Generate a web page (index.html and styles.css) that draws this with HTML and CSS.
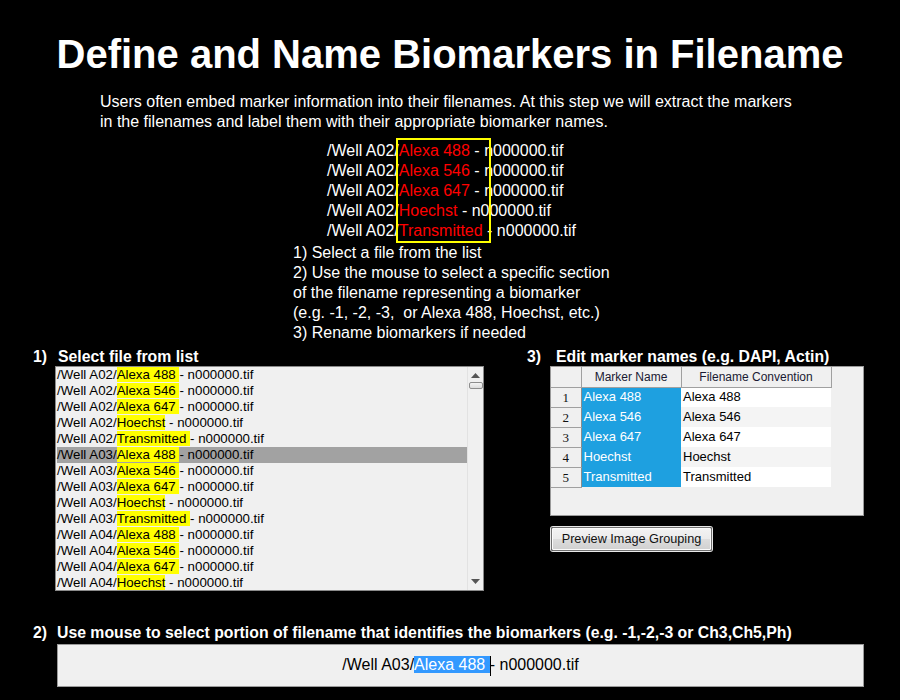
FILE: index.html
```html
<!DOCTYPE html>
<html>
<head>
<meta charset="utf-8">
<link rel="stylesheet" href="styles.css">
</head>
<body>
<div class="page">
  <h1 class="title">Define and Name Biomarkers in Filename</h1>
  <p class="intro">Users often embed marker information into their filenames. At this step we will extract the markers<br>in the filenames and label them with their appropriate biomarker names.</p>
  <div class="examples">
    <div class="ex-box"></div>
    <div>/Well A02/<span class="red">Alexa 488</span> - n000000.tif</div>
    <div>/Well A02/<span class="red">Alexa 546</span> - n000000.tif</div>
    <div>/Well A02/<span class="red">Alexa 647</span> - n000000.tif</div>
    <div>/Well A02/<span class="red">Hoechst</span> - n000000.tif</div>
    <div>/Well A02/<span class="red">Transmitted</span> - n000000.tif</div>
  </div>
  <div class="steps">
    <div>1) Select a file from the list</div>
    <div>2) Use the mouse to select a specific section</div>
    <div>of the filename representing a biomarker</div>
    <div>(e.g. -1, -2, -3, &nbsp;or Alexa 488, Hoechst, etc.)</div>
    <div>3) Rename biomarkers if needed</div>
  </div>

  <div class="panels">
    <div class="panel-left">
      <div class="sec-head"><span class="num n1">1)</span><span>Select file from list</span></div>
      <div class="listbox">
        <div class="items">
          <div class="item">/Well A02/<span class="hl">Alexa 488 </span>- n000000.tif</div>
          <div class="item">/Well A02/<span class="hl">Alexa 546 </span>- n000000.tif</div>
          <div class="item">/Well A02/<span class="hl">Alexa 647 </span>- n000000.tif</div>
          <div class="item">/Well A02/<span class="hl">Hoechst</span> - n000000.tif</div>
          <div class="item">/Well A02/<span class="hl">Transmitted </span>- n000000.tif</div>
          <div class="item sel">/Well A03/<span class="hl">Alexa 488 </span>- n000000.tif</div>
          <div class="item">/Well A03/<span class="hl">Alexa 546 </span>- n000000.tif</div>
          <div class="item">/Well A03/<span class="hl">Alexa 647 </span>- n000000.tif</div>
          <div class="item">/Well A03/<span class="hl">Hoechst</span> - n000000.tif</div>
          <div class="item">/Well A03/<span class="hl">Transmitted </span>- n000000.tif</div>
          <div class="item">/Well A04/<span class="hl">Alexa 488 </span>- n000000.tif</div>
          <div class="item">/Well A04/<span class="hl">Alexa 546 </span>- n000000.tif</div>
          <div class="item">/Well A04/<span class="hl">Alexa 647 </span>- n000000.tif</div>
          <div class="item">/Well A04/<span class="hl">Hoechst</span> - n000000.tif</div>
        </div>
        <div class="scrollbar">
          <svg class="arrow" width="9" height="5" viewBox="0 0 9 5"><polygon points="0,5 9,5 4.5,0" fill="#555"/></svg>
          <div class="thumb"></div>
          <div class="track"></div>
          <svg class="arrow" width="9" height="5" viewBox="0 0 9 5"><polygon points="0,0 9,0 4.5,5" fill="#555"/></svg>
        </div>
      </div>
    </div>

    <div class="panel-right">
      <div class="sec-head"><span class="num n3">3)</span><span>Edit marker names (e.g. DAPI, Actin)</span></div>
      <div class="grid">
        <table class="tbl">
          <tr class="hdr"><th class="rh"></th><th class="c1">Marker Name</th><th class="c2">Filename Convention</th></tr>
          <tr><td class="rh">1</td><td class="blue">Alexa 488</td><td class="w">Alexa 488</td></tr>
          <tr><td class="rh">2</td><td class="blue">Alexa 546</td><td class="g">Alexa 546</td></tr>
          <tr><td class="rh">3</td><td class="blue">Alexa 647</td><td class="w">Alexa 647</td></tr>
          <tr><td class="rh">4</td><td class="blue">Hoechst</td><td class="g">Hoechst</td></tr>
          <tr><td class="rh">5</td><td class="blue">Transmitted</td><td class="w">Transmitted</td></tr>
        </table>
      </div>
      <button class="btn">Preview Image Grouping</button>
    </div>
  </div>

  <div class="section2">
    <div class="sec-head"><span class="num n2">2)</span><span>Use mouse to select portion of filename that identifies the biomarkers (e.g. -1,-2,-3 or Ch3,Ch5,Ph)</span></div>
    <div class="namebox"><span>/Well A03/<span class="selection">Alexa 488 </span><span class="caret"></span>- n000000.tif</span></div>
  </div>
</div>
</body>
</html>
```

FILE: styles.css
```css
* { box-sizing: border-box; }
html, body { margin: 0; padding: 0; background: #000; }
body { width: 900px; height: 700px; overflow: hidden; font-family: "Liberation Sans", Arial, sans-serif; color: #fff; }
.page { padding-top: 31px; }

.title { margin: 0; font-size: 40px; font-weight: bold; line-height: 46px; text-align: center; }

.intro { margin: 15px 0 0 0; padding-left: 100px; font-size: 16px; line-height: 20px; }

.examples { position: relative; margin-top: 9px; padding-left: 327px; font-size: 16px; line-height: 20px; }
.examples .red { color: #ff0000; }
.ex-box { position: absolute; left: 396px; top: -3px; width: 95px; height: 105px; border: 2px solid #ffff00; }

.steps { margin-top: 2px; padding-left: 293px; font-size: 16px; line-height: 20px; }

.sec-head { display: flex; font-size: 15.8px; font-weight: bold; line-height: 18px; }
.num.n1 { width: 25px; }
.num.n3 { width: 29px; }
.num.n2 { width: 24px; }

.panels { display: flex; gap: 43px; margin-top: 5px; padding-left: 33px; }
.panel-left { width: 451px; }
.panel-right { width: 340px; }

.listbox { display: flex; margin: 0 0 0 22px; width: 429px; height: 225px; border: 1px solid #8a8a8a; background: #f0f0f0; color: #000; }
.items { flex: 1; overflow: hidden; font-size: 13.3px; line-height: 16px; padding-left: 1px; }
.item { height: 16px; white-space: pre; }
.item.sel { background: #a2a2a2; }
.hl { background: #ffff00; }
.scrollbar { width: 16px; display: flex; flex-direction: column; align-items: center; border-left: 1px solid #e2e2e2; background: #f0f0f0; padding-top: 6px; padding-bottom: 6px; }
.scrollbar .arrow { flex: none; }
.thumb { margin-top: 4px; width: 14px; height: 7px; border: 1px solid #8d8d8d; border-radius: 2px; background: linear-gradient(#f4f4f4, #dcdcdc); }
.track { flex: 1; }

.grid { margin: 0 0 0 23px; width: 314px; height: 150px; border: 1px solid #9a9a9a; background: #f0f0f0; color: #000; }
.tbl { border-collapse: collapse; font-size: 13px; }
.tbl th, .tbl td { padding: 0; height: 20px; line-height: 18px; white-space: nowrap; }
.tbl .hdr th { font-weight: normal; font-size: 12px; color: #1a1a33; background: #f0f0f0; border-right: 1px solid #a0a0a0; border-bottom: 1px solid #a0a0a0; text-align: center; }
.tbl th.rh { width: 30px; }
.tbl th.c1 { width: 100px; }
.tbl th.c2 { width: 150px; }
.tbl td.rh { background: #f0f0f0; border-right: 1px solid #8c8c8c; border-bottom: 1px solid #a0a0a0; text-align: center; vertical-align: bottom; font-family: "Liberation Serif", serif; font-size: 13px; color: #111; }
.tbl td.blue { background: #1ea0e0; color: #fff; padding-left: 2px; }
.tbl td.w { background: #fff; padding-left: 2px; }
.tbl td.g { background: #f4f4f4; padding-left: 2px; }

.btn { display: block; margin: 11px 0 0 24px; width: 161px; height: 24px; padding: 0 0 1px 0; font-family: "Liberation Sans", Arial, sans-serif; font-size: 12.7px; color: #111; border: 1px solid #707070; border-radius: 2px; background: linear-gradient(#f3f3f3, #ebebeb 50%, #dddddd 50%, #d0d0d0); box-shadow: inset 0 0 0 1px #fbfbfb, 0 0 0 1px #e8e8e8; }

.section2 { margin-top: 33px; padding-left: 33px; }
.namebox { margin: 2px 0 0 24px; width: 807px; height: 43px; border: 1px solid #9a9a9a; background: #f0f0f0; color: #000; display: flex; align-items: center; justify-content: center; font-size: 16px; white-space: pre; }
.selection { background: #3399ff; color: #fff; }
.caret { display: inline-block; width: 1px; height: 20px; background: #000; vertical-align: middle; margin-right: -1px; }
```
